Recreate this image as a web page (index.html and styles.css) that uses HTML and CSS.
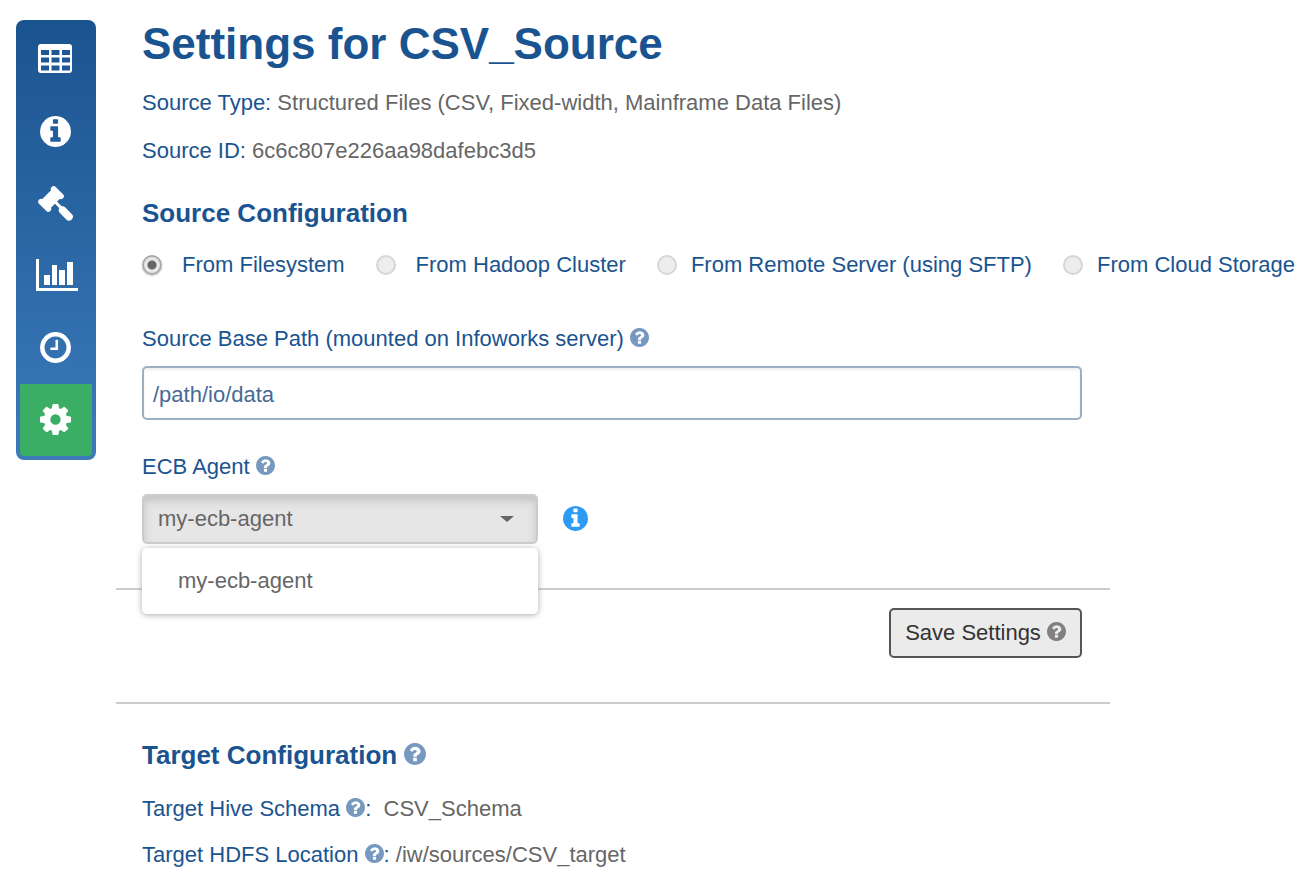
FILE: index.html
```html
<!DOCTYPE html>
<html lang="en">
<head>
    <meta charset="UTF-8">
    <meta name="viewport" content="width=device-width, initial-scale=1.0">
    <title>Settings for CSV_Source</title>
    <link rel="stylesheet" href="styles.css">
</head>
<body>
    <!-- shared icons -->
    <svg class="sprite" aria-hidden="true">
        <symbol id="icon-help" viewBox="128 128 1536 1536">
            <path d="M1024 1376v-192q0-14-9-23t-23-9h-192q-14 0-23 9t-9 23v192q0 14 9 23t23 9h192q14 0 23-9t9-23zm256-672q0-88-55.500-163t-138.500-116-170-41q-243 0-371 213-15 24 8 42l132 100q7 6 19 6 16 0 25-12 53-68 86-92 34-24 86-24 48 0 85.500 26t37.500 59q0 38-20 61t-68 45q-63 28-115.500 86.500t-52.500 125.500v36q0 14 9 23t23 9h192q14 0 23-9t9-23q0-19 21.500-49.500t54.500-49.500q32-18 49-28.500t46-35 44.500-48 28-60.500 12.500-81zm384 192q0 209-103 385.500t-279.500 279.500-385.500 103-385.500-103-279.500-279.500-103-385.500 103-385.500 279.500-279.500 385.500-103 385.500 103 279.500 279.500 103 385.500z"/>
        </symbol>
        <symbol id="icon-info" viewBox="128 128 1536 1536">
            <path d="M1152 1376v-160q0-14-9-23t-23-9h-96v-512q0-14-9-23t-23-9h-320q-14 0-23 9t-9 23v160q0 14 9 23t23 9h96v320h-96q-14 0-23 9t-9 23v160q0 14 9 23t23 9h448q14 0 23-9t9-23zm-128-896v-160q0-14-9-23t-23-9h-192q-14 0-23 9t-9 23v160q0 14 9 23t23 9h192q14 0 23-9t9-23zm640 416q0 209-103 385.500t-279.500 279.500-385.500 103-385.500-103-279.500-279.500-103-385.500 103-385.500 279.500-279.500 385.500-103 385.500 103 279.500 279.500 103 385.500z"/>
        </symbol>
    </svg>

    <nav class="sidebar">
        <a href="#tables" title="Tables">
            <svg width="34" height="31" viewBox="0 0 34 31"><path fill-rule="evenodd" d="M3 0h28a3 3 0 0 1 3 3v23a3 3 0 0 1-3 3h-28a3 3 0 0 1-3-3v-23a3 3 0 0 1 3-3zM3 6v5h8v-5zM13.500 6v5h8v-5zM24 6v5h8v-5zM3 13.500v5h8v-5zM13.500 13.500v5h8v-5zM24 13.500v5h8v-5zM3 21.500v5h8v-5zM13.500 21.500v5h8v-5zM24 21.500v5h8v-5z"/></svg>
        </a>
        <a href="#info" title="Info">
            <svg width="31" height="31"><use href="#icon-info"/></svg>
        </a>
        <a href="#build" title="Build">
            <svg width="35" height="35" viewBox="114 528 105 105">
                <path d="M156 538l26 26-32 32-26-26z"/>
                <path class="line" stroke-width="17" d="M161 537l22 22M123 575l22 22"/>
                <path class="line" stroke-width="9" d="M160 570l28 28"/>
                <path class="line" stroke-width="23" d="M188 601l19 19"/>
            </svg>
        </a>
        <a href="#reports" title="Reports">
            <svg width="46" height="32" viewBox="-4 0 46 32"><path d="M0 0h3v29h39v3h-42zM8 16h6v10h-6zM16 6h5v20h-5zM23 11h6v15h-6zM31 3h6v23h-6z"/></svg>
        </a>
        <a href="#schedule" title="Schedule">
            <svg width="31" height="31" viewBox="128 128 1536 1536"><path d="M1024 544v448q0 14-9 23t-23 9h-320q-14 0-23-9t-9-23v-64q0-14 9-23t23-9h224v-352q0-14 9-23t23-9h64q14 0 23 9t9 23zm416 352q0-148-73-273t-198-198-273-73-273 73-198 198-73 273 73 273 198 198 273 73 273-73 198-198 73-273zm224 0q0 209-103 385.500t-279.500 279.500-385.500 103-385.500-103-279.500-279.500-103-385.500 103-385.500 279.500-279.500 385.500-103 385.500 103 279.500 279.500 103 385.500z"/></svg>
        </a>
        <a href="#settings" title="Settings" class="active">
            <svg width="31" height="31" viewBox="128 128 1536 1536"><path d="M1152 896q0-106-75-181t-181-75-181 75-75 181 75 181 181 75 181-75 75-181zm512-109v222q0 12-8 23t-20 13l-185 28q-19 54-39 91 35 50 107 138 10 12 10 25t-9 23q-27 37-99 108t-94 71q-12 0-26-9l-138-108q-44 23-91 38-16 136-29 186-7 28-36 28h-222q-14 0-24.500-8.500t-11.500-21.500l-28-184q-49-16-90-37l-141 107q-10 9-25 9-14 0-25-11-126-114-165-168-7-10-7-23 0-12 8-23 15-21 51-66.500t54-70.500q-27-50-41-99l-183-27q-13-2-21-12.500t-8-23.500v-222q0-12 8-23t19-13l186-28q14-46 39-92-40-57-107-138-10-12-10-24 0-10 9-23 26-36 98.500-107.500t94.500-71.500q13 0 26 10l138 107q44-23 91-38 16-136 29-186 7-28 36-28h222q14 0 24.500 8.500t11.500 21.500l28 184q49 16 90 37l142-107q9-9 24-9 13 0 25 10 129 119 165 170 7 8 7 22 0 12-8 23-15 21-51 66.500t-54 70.500q26 50 41 98l183 28q13 2 21 12.500t8 23.500z"/></svg>
        </a>
    </nav>

    <main>
        <header class="section">
            <h1>Settings for CSV_Source</h1>
            <p><span class="name">Source Type:</span> Structured Files (CSV, Fixed-width, Mainframe Data Files)</p>
            <p><span class="name">Source ID:</span> 6c6c807e226aa98dafebc3d5</p>
        </header>

        <form onsubmit="return false">
            <h2>Source Configuration</h2>
            <div class="radios">
                <label><input type="radio" name="from" checked>From Filesystem</label>
                <label><input type="radio" name="from">From Hadoop Cluster</label>
                <label class="tight"><input type="radio" name="from">From Remote Server (using SFTP)</label>
                <label class="tight"><input type="radio" name="from">From Cloud Storage</label>
            </div>

            <div class="section">
                <div class="field">
                    <label for="basePath">Source Base Path (mounted on Infoworks server) <svg class="help"><use href="#icon-help"/></svg></label>
                    <input type="text" id="basePath" value="/path/io/data">
                </div>

                <div class="field">
                    <label for="agent">ECB Agent <svg class="help"><use href="#icon-help"/></svg></label>
                    <div class="agent-row">
                        <div class="dropdown">
                            <select id="agent">
                                <option>my-ecb-agent</option>
                            </select>
                            <ul class="menu">
                                <li>my-ecb-agent</li>
                            </ul>
                        </div>
                        <svg class="agent-info"><use href="#icon-info"/></svg>
                    </div>
                </div>
            </div>

            <div class="section actions">
                <button type="submit">Save Settings <svg class="help"><use href="#icon-help"/></svg></button>
            </div>
        </form>

        <section class="section target">
            <h2>Target Configuration <svg class="help"><use href="#icon-help"/></svg></h2>
            <p><span class="name">Target Hive Schema <svg class="help"><use href="#icon-help"/></svg>:</span>&nbsp; CSV_Schema</p>
            <p><span class="name">Target HDFS Location <svg class="help"><use href="#icon-help"/></svg>:</span> /iw/sources/CSV_target</p>
        </section>
    </main>
</body>
</html>
```
FILE: styles.css
```css
* {
    box-sizing: border-box;
}
body {
    display: flex;
    align-items: flex-start;
    margin: 0;
    padding: 20px 0 20px 16px;
    background: #fff;
    color: #666;
    font: 22px/24px "Helvetica Neue", Helvetica, "Liberation Sans", Arial, sans-serif;
}
.sprite {
    position: absolute;
    width: 0;
    height: 0;
}
h1, h2, p, ul {
    margin: 0;
}
h1, h2, label, .name {
    color: #1a5490;
}
h1 {
    margin-bottom: 24px;
    font-size: 44px;
    line-height: 47px;
}
h2 {
    font-size: 26px;
    line-height: 28px;
}
input, select, button {
    font: inherit;
}

/* sidebar */
.sidebar {
    flex: none;
    width: 80px;
    padding: 4px;
    border-radius: 8px;
    background: linear-gradient(#1a5490, #3c7aba);
}
.sidebar a {
    display: flex;
    align-items: center;
    justify-content: center;
    height: 72px;
    padding: 0 2px 2px 0;
}
.sidebar .active {
    border-radius: 0 0 4px 4px;
    background: #3aae64;
}
.sidebar svg {
    fill: #fff;
}
.sidebar .line {
    fill: none;
    stroke: #fff;
    stroke-linecap: round;
}

/* content */
main {
    flex: 1;
    min-width: 0;
    margin-left: 20px;
}
.section {
    max-width: 994px;
    padding: 0 28px 0 26px;
}
header p {
    margin-bottom: 24px;
}
form h2 {
    margin: 36px 0 26px 26px;
}
.help {
    width: 19px;
    height: 19px;
    vertical-align: -1px;
    fill: #7799bf;
}

.radios {
    display: flex;
    gap: 31px;
    margin: 0 0 50px 26px;
    white-space: nowrap;
}
.radios label {
    display: flex;
    align-items: center;
    gap: 20px;
}
.radios .tight {
    gap: 14px;
}
.radios input {
    appearance: none;
    flex: none;
    width: 20px;
    height: 20px;
    margin: 0;
    border: 2px solid #d6d6d6;
    border-radius: 50%;
    background: #ededed;
}
.radios input:checked {
    border-color: #aaa;
    background: radial-gradient(circle, #666 4px, #e6e6e6 5px);
    box-shadow: 0 1px 2px #ccc;
}

.field {
    margin-bottom: 35px;
}
.field label {
    display: block;
    margin-bottom: 15px;
}
.field input {
    display: block;
    width: 100%;
    height: 54px;
    padding: 4px 9px 0;
    border: 2px solid #9dafc4;
    border-radius: 5px;
    color: #476a96;
    box-shadow: inset 0 2px 3px #eee;
}
.agent-row {
    display: flex;
    align-items: center;
    gap: 25px;
}
.dropdown {
    position: relative;
    width: 396px;
}
.dropdown::after {
    content: "";
    position: absolute;
    top: 22px;
    right: 24px;
    border: 7px solid transparent;
    border-top: 6px solid #666;
    border-bottom: 0;
    pointer-events: none;
}
select {
    appearance: none;
    display: block;
    width: 100%;
    height: 50px;
    padding: 0 14px;
    border: 2px solid #ccc;
    border-radius: 5px;
    background: #e6e6e6;
    color: #666;
    box-shadow: inset 0 5px 8px #c4c4c4;
}
.menu {
    position: absolute;
    z-index: 1;
    top: 54px;
    left: 0;
    width: 100%;
    padding: 21px 36px;
    border-radius: 5px;
    background: #fff;
    box-shadow: 0 1px 6px #aaa;
    list-style: none;
}
.agent-info {
    width: 25px;
    height: 25px;
    margin-bottom: 2px;
    fill: #2d9bf3;
}

.actions {
    display: flex;
    justify-content: flex-end;
    margin-top: 44px;
    padding-top: 18px;
    padding-bottom: 44px;
    border: solid #ccc;
    border-width: 2px 0;
}
button {
    height: 50px;
    padding: 0 14px;
    border: 2px solid #555;
    border-radius: 5px;
    background: #ebebeb;
    color: #333;
}
button .help {
    fill: #808080;
}

.target {
    padding-top: 37px;
}
.target h2 {
    margin-bottom: 28px;
}
.target h2 .help {
    width: 22px;
    height: 22px;
}
.target p {
    margin-bottom: 22px;
}
```
